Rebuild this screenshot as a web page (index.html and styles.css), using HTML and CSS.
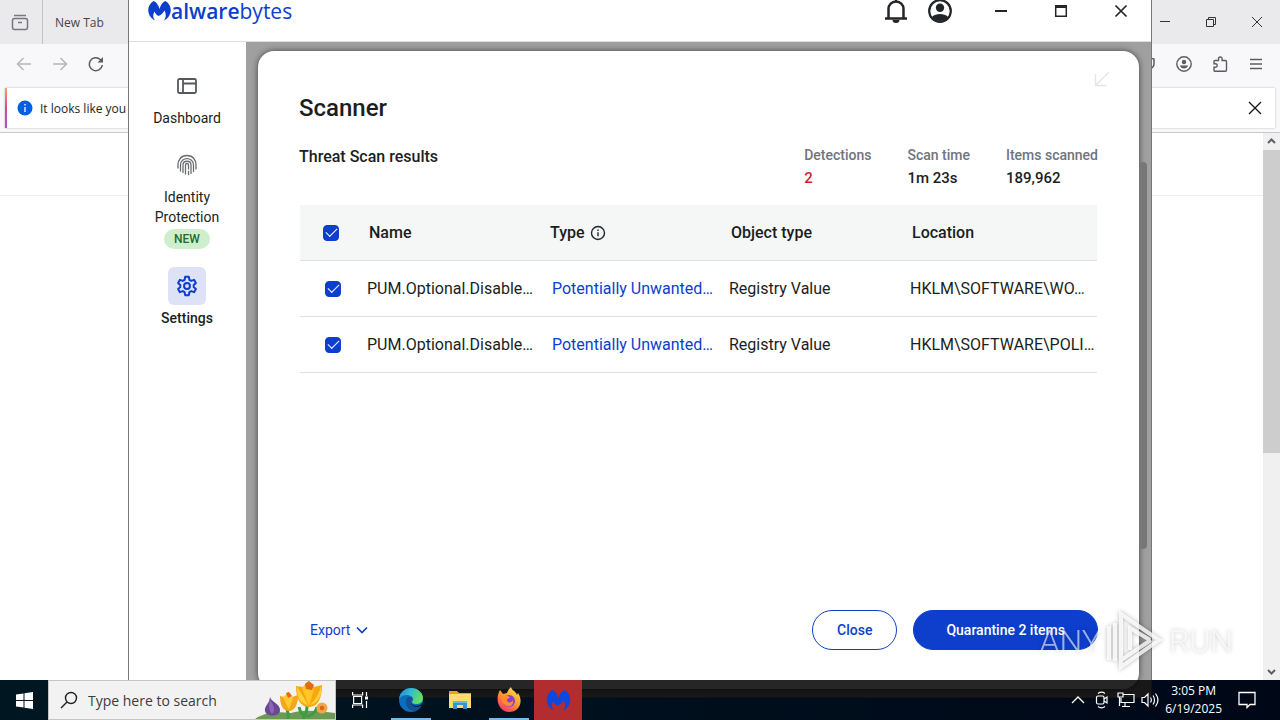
FILE: index.html
```html
<!DOCTYPE html>
<html lang="en">
<head>
    <meta charset="UTF-8">
    <meta name="viewport" content="width=device-width, initial-scale=1.0">
    <title>Malwarebytes</title>
    <link rel="stylesheet" href="styles.css">
</head>
<body>
    <div class="desktop">
        <!-- browser window behind -->
        <div class="browser">
            <div class="tab-strip">
                <button class="tab-view" aria-label="Firefox View">
                    <svg width="18" height="18" viewBox="0 0 18 18" fill="none" stroke="#77777d" stroke-width="1.5"><rect x="1.5" y="5.5" width="15" height="11" rx="2"/><path d="M3 2.5h12M7 9.5h4"/></svg>
                </button>
                <button class="tab">New Tab</button>
                <div class="browser-controls">
                    <button aria-label="Minimize"><svg width="12" height="12" viewBox="0 0 12 12" stroke="#333"><path d="M1 5.5h10"/></svg></button>
                    <button aria-label="Restore"><svg width="12" height="12" viewBox="0 0 12 12" fill="none" stroke="#333"><path d="M1.5 3.5h7v7h-7zM3.5 3.5v-2h7v7h-2"/></svg></button>
                    <button aria-label="Close"><svg width="12" height="12" viewBox="0 0 12 12" stroke="#333"><path d="M1 1l10 10M11 1L1 11"/></svg></button>
                </div>
            </div>
            <div class="toolbar">
                <button aria-label="Back"><svg width="16" height="16" viewBox="0 0 16 16" fill="none" stroke="#b5b5bb" stroke-width="1.5"><path d="M15 8H1.500M7.500 2L1.500 8l6 6"/></svg></button>
                <button aria-label="Forward"><svg width="16" height="16" viewBox="0 0 16 16" fill="none" stroke="#b5b5bb" stroke-width="1.5"><path d="M1 8h13.500M8.500 2l6 6-6 6"/></svg></button>
                <button aria-label="Reload"><svg width="16" height="16" viewBox="0 0 16 16" fill="none" stroke="#5b5b61" stroke-width="1.5"><path d="M14.300 9a6.500 6.500 0 1 1-2-5.500l1.500 1.500"/><path d="M15 1v5.500H9.500z" fill="#5b5b61" stroke="none"/></svg></button>
                <div class="toolbar-end">
                    <button aria-label="Protections"><svg width="16" height="16" viewBox="0 0 16 16" fill="none" stroke="#5b5b61" stroke-width="1.5"><path d="M2 3l6-1.5L14 3v5c0 3-3 5-6 6.5C5 13 2 11 2 8z"/></svg></button>
                    <button aria-label="Account"><svg width="16" height="16" viewBox="0 0 16 16" fill="none" stroke="#5b5b61" stroke-width="1.4"><circle cx="8" cy="8" r="7.2"/><circle cx="8" cy="6" r="2.2" fill="#5b5b61" stroke="none"/><path d="M3.8 9.5h8.400c-.8 2-2.300 3-4.200 3s-3.400-1-4.200-3z" fill="#5b5b61" stroke="none"/></svg></button>
                    <button aria-label="Extensions"><svg width="16" height="16" viewBox="0 0 16 16" fill="none" stroke="#5b5b61" stroke-width="1.4"><path d="M2 5.500a1 1 0 0 1 1-1h3.500V2.800a1.800 1.800 0 0 1 3.600 0v1.700h3.400a1 1 0 0 1 1 1v8.700a1 1 0 0 1-1 1H3a1 1 0 0 1-1-1v-3h1.500a1.600 1.600 0 0 0 0-3.400H2z"/></svg></button>
                    <button aria-label="Menu"><svg width="16" height="16" viewBox="0 0 16 16" stroke="#5b5b61" stroke-width="1.4"><path d="M2 3.500h12M2 8h12M2 12.500h12"/></svg></button>
                </div>
            </div>
            <div class="infobar-wrap">
                <div class="infobar">
                    <svg width="16" height="16" viewBox="0 0 16 16"><circle cx="8" cy="8" r="7.5" fill="#0061e0"/><path d="M8 7v5M8 4v1.600" stroke="#fff" stroke-width="1.3"/></svg>
                    <span>It looks like you h</span>
                    <button aria-label="Dismiss"><svg width="14" height="14" viewBox="0 0 14 14" stroke="#15141a" stroke-width="1.3"><path d="M1 1l12 12M13 1L1 13"/></svg></button>
                </div>
            </div>
            <div class="page">
                <div class="page-body"><div class="page-head"></div></div>
                <div class="scrollbar">
                    <svg width="17" height="17" viewBox="0 0 17 17" fill="none" stroke="#606060" stroke-width="2"><path d="M5 10l3.500-3.500L12 10"/></svg>
                    <div class="scroll-track"><div class="scroll-thumb"></div></div>
                    <svg width="17" height="17" viewBox="0 0 17 17" fill="none" stroke="#606060" stroke-width="2"><path d="M5 7l3.500 3.500L12 7"/></svg>
                </div>
            </div>
        </div>

        <!-- Malwarebytes window -->
        <div class="app">
            <header class="app-header">
                <div class="logo">
                    <svg width="23" height="22" viewBox="0 0 23 22" fill="#0d3ecc"><path d="M5.500 1C1 4-1 9 1 14c1 3 3 5 6 6.500C5 18 4.500 15 6.500 11.500c1 2 2 3.500 4 4.500 3-1 4.500-3 6-5.500 2 4 1.500 7-.5 10 3-1.500 5-3.500 6-6.500C24 9 22 4 17.500 1c-3 1-5 4-6 8-1-4-3-7-6-8z"/></svg>
                    <span class="logo-text"><b>alware</b>bytes</span>
                </div>
                <div class="header-actions">
                    <button aria-label="Notifications"><svg width="24" height="26" viewBox="0 0 24 26" fill="none" stroke="#22262a" stroke-width="2.5"><path d="M1 20.500h22M4.500 20V11a7.500 7.500 0 0 1 15 0v9M12 1.500v2"/><path d="M8.500 22h7a3.500 3 0 0 1-7 0z" fill="#22262a" stroke="none"/></svg></button>
                    <button aria-label="Account"><svg width="24" height="24" viewBox="0 0 24 24" fill="none" stroke="#22262a" stroke-width="2.2"><circle cx="12" cy="12" r="10.8"/><circle cx="12" cy="8.8" r="4.2" fill="#22262a" stroke="none"/><path d="M4 18c2-2.300 5-3 8-3s6 .7 8 3c-2 2.700-5 4-8 4s-6-1.300-8-4z" fill="#22262a" stroke="none"/></svg></button>
                </div>
                <div class="window-controls">
                    <button aria-label="Minimize"><svg width="14" height="14" viewBox="0 0 14 14" stroke="#22262a" stroke-width="2"><path d="M1 7h12"/></svg></button>
                    <button aria-label="Maximize"><svg width="14" height="14" viewBox="0 0 14 14" fill="none" stroke="#22262a" stroke-width="1.5"><path d="M1.700 2h10.600v10.300H1.700z"/><path d="M1 2.500h12" stroke-width="3"/></svg></button>
                    <button aria-label="Close"><svg width="14" height="14" viewBox="0 0 14 14" stroke="#22262a" stroke-width="1.7"><path d="M1.500 1.500l11 11M12.500 1.500l-11 11"/></svg></button>
                </div>
            </header>

            <div class="app-body">
                <nav class="sidebar">
                    <a href="#" class="nav-item">
                        <span class="nav-icon"><svg width="20" height="16" viewBox="0 0 20 16" fill="none" stroke="#55595e" stroke-width="1.8"><rect x="1" y="1" width="18" height="14" rx="1.5"/><path d="M6 1v14M6 5.500h13"/></svg></span>
                        Dashboard
                    </a>
                    <a href="#" class="nav-item">
                        <span class="nav-icon"><svg width="20" height="22" viewBox="0 0 20 22" fill="none" stroke="#6a6e73" stroke-width="1.3" stroke-linecap="round"><path d="M3 4.500C6.500.5 13.500.5 17 4.500M1 10c0-2 .7-3.500 2-5M19 10c0-2-.7-3.500-2-5M1 10v4M19 10v5M3.500 17v-6c0-8.500 13-8.500 13 0v6.500M6 18.500V11c0-5 8-5 8 0v8.500M8.500 20v-9c0-2 3-2 3 0v4M11.500 17.500v3"/></svg></span>
                        Identity Protection
                        <span class="badge">NEW</span>
                    </a>
                    <a href="#" class="nav-item active">
                        <span class="nav-icon"><svg width="22" height="22" viewBox="0 0 24 24" fill="none" stroke="#0d3ecc" stroke-width="2.2" stroke-linejoin="round"><path d="M10 2h4l.6 3.200 2 1.200L19.700 5.300l2 3.400L19.300 10.800v2.400l2.400 2.100-2 3.400-3.100-1.100-2 1.200L14 22h-4l-.6-3.200-2-1.200-3.100 1.100-2-3.400 2.400-2.100v-2.400L2.300 8.700l2-3.400 3.100 1.100 2-1.200z"/><circle cx="12" cy="12" r="3.2"/></svg></span>
                        Settings
                    </a>
                </nav>

                <div class="content">
                    <div class="modal">
                        <button class="collapse" aria-label="Collapse"><svg width="16" height="16" viewBox="0 0 16 16" fill="none" stroke="#e6e6e6" stroke-width="1.5"><path d="M15 1L2 14M1.500 3v11.500H13"/></svg></button>
                        <h1>Scanner</h1>
                        <div class="summary">
                            <h2>Threat Scan results</h2>
                            <dl class="stats">
                                <div><dt>Detections</dt><dd class="danger">2</dd></div>
                                <div><dt>Scan time</dt><dd>1m 23s</dd></div>
                                <div><dt>Items scanned</dt><dd>189,962</dd></div>
                            </dl>
                        </div>
                        <table class="results">
                            <thead>
                                <tr>
                                    <th class="check"><input type="checkbox" aria-label="Select all" checked></th>
                                    <th class="col">Name</th>
                                    <th class="col">Type <svg width="16" height="16" viewBox="0 0 16 16" fill="none" stroke="#22262a" stroke-width="1.4"><circle cx="8" cy="8" r="6.5"/><path d="M8 7.200v4M8 4.500V6"/></svg></th>
                                    <th class="col">Object type</th>
                                    <th>Location</th>
                                </tr>
                            </thead>
                            <tbody>
                                <tr>
                                    <td class="check"><input type="checkbox" aria-label="Select item 1" checked></td>
                                    <td>PUM.Optional.Disable…</td>
                                    <td class="type"><a href="#">Potentially Unwanted…</a></td>
                                    <td>Registry Value</td>
                                    <td>HKLM\SOFTWARE\WO…</td>
                                </tr>
                                <tr>
                                    <td class="check"><input type="checkbox" aria-label="Select item 2" checked></td>
                                    <td>PUM.Optional.Disable…</td>
                                    <td class="type"><a href="#">Potentially Unwanted…</a></td>
                                    <td>Registry Value</td>
                                    <td>HKLM\SOFTWARE\POLI…</td>
                                </tr>
                            </tbody>
                        </table>
                        <footer class="modal-footer">
                            <button class="export">Export <svg width="12" height="8" viewBox="0 0 12 8" fill="none" stroke="#0d3ecc" stroke-width="1.6"><path d="M1 1.500l5 5 5-5"/></svg></button>
                            <button class="btn">Close</button>
                            <button class="btn primary">Quarantine 2 items</button>
                        </footer>
                    </div>
                    <div class="app-scroll"></div>
                </div>
            </div>
        </div>

        <div class="watermark">
            <span>ANY</span>
            <svg width="58" height="66" viewBox="0 0 58 66" fill="none" stroke="#fff" stroke-opacity=".8" stroke-width="4"><path d="M15 52V6l38 26-38 27v-7l30-20M24 42V20l20 12M9 15v38M3 18v34"/></svg>
            <span>RUN</span>
        </div>

        <footer class="taskbar">
            <button class="start" aria-label="Start"><svg width="17" height="17" viewBox="0 0 17 17" fill="#fff"><path d="M0 2.500L7.500 1.500V8H0zM8.500 1.300L17 0v8H8.500zM0 9h7.500v6.500L0 14.500zM8.500 9H17v8l-8.500-1.300z"/></svg></button>
            <label class="search">
                <svg width="18" height="18" viewBox="0 0 18 18" fill="none" stroke="#222" stroke-width="1.4"><circle cx="11" cy="7" r="5.5"/><path d="M7 11l-6 6"/></svg>
                <input type="text" placeholder="Type here to search" aria-label="Search">
                <svg class="flowers" width="80" height="40" viewBox="0 0 80 40">
                    <path d="M0 40C12 32 25 33 36 34 48 30 66 32 80 34v6z" fill="#6b9a55"/>
                    <path d="M33 40c1-6-1-9-2-13M48 40c4-6 4-10 4-15M52 38c5-2 9-6 10-10M50 37c-3-1-5-5-6-9" stroke="#3f9a45" stroke-width="3" fill="none"/>
                    <path d="M15 18c1 5 11 7 10 14-1 6-14 6-15 0-1-5 5-8 5-14z" fill="#6b4794"/><path d="M15 19c-1 7-2 11 2 16 5-5 0-9-2-16z" fill="#8c66b5"/>
                    <path d="M25 17l4 1 4-4 4 4 6-2c0 9-3 16-9 16-6 0-9-6-9-15z" fill="#f3a818"/><path d="M28 18l5-4 5 5-4 12z" fill="#ffc936"/><path d="M31 14l3-1 3 4-4 2z" fill="#e56a16"/>
                    <path d="M41 7l7 1 5-6 6 6 8-2c0 13-4 22-13 22S41 19 41 7z" fill="#f7a80d"/><path d="M47 9l6-6 6 7-5 17z" fill="#ffc625"/><path d="M50 5l4-3 5 4-2 5-6-1z" fill="#e56a16"/><path d="M42 8c4 6 8 12 11 18-9-2-11-9-11-18zM66 7c-2 8-6 14-11 19 9-2 12-10 11-19z" fill="#ffd03a"/>
                    <circle cx="67" cy="29" r="5.5" fill="#f0a64b"/><circle cx="67" cy="29" r="2.3" fill="#d6681d"/>
                </svg>
            </label>
            <div class="tasks">
                <button class="task task-view" aria-label="Task view"><svg width="17" height="16" viewBox="0 0 17 16" fill="none" stroke="#fff" stroke-width="1.2"><path d="M.6 0v3h10V0M.6 16v-3h10v3M1.600 4.500h8v7h-8zM14.500 0v4M14.500 9v7"/><path d="M13 4.500h3v3h-3z" fill="#fff" stroke="none"/></svg></button>
                <button class="task open" aria-label="Edge">
                    <svg width="26" height="26" viewBox="0 0 26 26">
                        <defs><linearGradient id="edge" x1="0" y1="0" x2="1" y2=".4"><stop offset="0" stop-color="#1688ce"/><stop offset=".5" stop-color="#35bbd0"/><stop offset="1" stop-color="#63df62"/></linearGradient></defs>
                        <circle cx="13" cy="13" r="12" fill="#0c6dbd"/><path d="M1 12C2 5 7 1 13 1c7 0 12 5 12 10 0 4-3 6-7 6-3 0-4-1-4-2 3-3 0-7-5-7-4 0-7 2-8 4z" fill="url(#edge)"/><path d="M9 11c-3 5 0 12 7 13 3 0 6-3 7-5-5 3-11 0-10-5 0-1 1-2 2-2-1-2-4-3-6-1z" fill="#154f91"/><path d="M13 13c-1 5 5 7 9 5l4-3v3l-3 1c-6 3-11-1-10-6z" fill="#061820"/>
                    </svg>
                </button>
                <button class="task" aria-label="File Explorer"><svg width="22" height="20" viewBox="0 0 22 20"><path d="M0 1h8l2 2h12v15H0z" fill="#e0a32d"/><path d="M0 4h22v14H0z" fill="#ffdc73"/><path d="M4 19v-8h14v8h-4v-4H8v4z" fill="#3d92cb"/><path d="M4 11h14v2H4z" fill="#67b6e5"/></svg></button>
                <button class="task open" aria-label="Firefox">
                    <svg width="24" height="26" viewBox="0 0 24 26">
                        <defs><linearGradient id="fox" x1=".8" y1="0" x2=".2" y2="1"><stop offset="0" stop-color="#ffe64a"/><stop offset=".5" stop-color="#ff9330"/><stop offset="1" stop-color="#f53069"/></linearGradient></defs>
                        <path d="M3 3l3 4 4-1c1-3 3-5 4-6 1 4 5 4 6 8l1-2c6 9 1 19-9 19C3 25-3 14 3 3z" fill="url(#fox)"/><circle cx="12" cy="14" r="6" fill="#8440ce"/><path d="M5 9c5-2 7 0 8 2-3 0-4 2-2 4 2 1 4 0 5-2 1 6-4 8-8 5-3-2-4-6-3-9z" fill="#ff8b2a"/>
                    </svg>
                </button>
                <button class="task alert" aria-label="Malwarebytes"><svg width="25" height="23" viewBox="0 0 23 22" fill="#0b48e0"><path d="M5.500 1C1 4-1 9 1 14c1 3 3 5 6 6.500C5 18 4.500 15 6.500 11.500c1 2 2 3.500 4 4.500 3-1 4.500-3 6-5.500 2 4 1.500 7-.5 10 3-1.500 5-3.500 6-6.500C24 9 22 4 17.500 1c-3 1-5 4-6 8-1-4-3-7-6-8z"/></svg></button>
            </div>
            <div class="tray">
                <button aria-label="Show hidden icons"><svg width="14" height="8" viewBox="0 0 14 8" fill="none" stroke="#fff" stroke-width="1.4"><path d="M1 7l6-6 6 6"/></svg></button>
                <button aria-label="Meet now"><svg width="14" height="18" viewBox="0 0 14 18" fill="none" stroke="#fff" stroke-width="1.2"><rect x="1.5" y="5" width="7.5" height="8" rx="1.5"/><path d="M9 8l3-2v6l-3-2M3 2.500c2-1.500 5-1.500 7 0M3 15.500c2 1.500 5 1.500 7 0"/></svg></button>
                <button aria-label="Network"><svg width="18" height="16" viewBox="0 0 18 16" fill="none" stroke="#fff" stroke-width="1.2"><path d="M6 2.500h11v8H4V6M8 10.500v4M5 14.500h8M1 1h5v4H1zM2.500 5v9"/></svg></button>
                <button aria-label="Volume"><svg width="18" height="16" viewBox="0 0 18 16" fill="none" stroke="#fff" stroke-width="1.2"><path d="M1 5.500h2.500L7 2v12l-3.500-3.500H1zM9.500 5.500c1 1.500 1 3.500 0 5M12 3.500c2 2.500 2 6.500 0 9M14.500 1.500c3 4 3 9 0 13"/></svg></button>
                <time class="clock">3:05 PM<br>6/19/2025</time>
                <button class="action-center" aria-label="Action center"><svg width="18" height="18" viewBox="0 0 18 18" fill="none" stroke="#fff" stroke-width="1.3"><path d="M1 1.500h16v12h-5l-3 3v-3H1z"/></svg></button>
            </div>
        </footer>
    </div>
</body>
</html>
```
FILE: styles.css
```css
* {
    box-sizing: border-box;
}
body {
    margin: 0;
    font-family: Roboto, "Liberation Sans", sans-serif;
    color: #1b1e21;
}
button {
    display: flex;
    align-items: center;
    justify-content: center;
    padding: 0;
    border: none;
    background: none;
    font-family: inherit;
    color: inherit;
    cursor: pointer;
}
a {
    color: inherit;
    text-decoration: none;
}
svg {
    flex-shrink: 0;
}
.desktop {
    position: relative;
    display: flex;
    flex-direction: column;
    height: 100vh;
    overflow: hidden;
    background: linear-gradient(to right, #009ae0, #0035a0);
}

/* browser */
.browser {
    flex: 1;
    display: flex;
    flex-direction: column;
    min-height: 0;
    background: #fff;
    font-family: "Open Sans", "Noto Sans", sans-serif;
}
.tab-strip {
    display: flex;
    height: 44px;
    background: #eaeaed;
}
.tab-view {
    width: 43px;
    padding-right: 2px;
    border-right: 1px solid #c4c4c8;
}
.tab {
    padding: 0 12px;
    font-size: 12px;
    color: #45454c;
}
.browser-controls {
    display: flex;
    margin-left: auto;
}
.browser-controls button {
    width: 46px;
}
.toolbar {
    display: flex;
    height: 40px;
    padding: 0 16px;
    gap: 20px;
    background: #f8f8fb;
}
.toolbar-end {
    display: flex;
    gap: 20px;
    margin-left: auto;
}
.infobar-wrap {
    padding: 4px 5px;
    background: #f8f8fb;
    border-bottom: 1px solid #c8c8cc;
}
.infobar {
    display: flex;
    align-items: center;
    gap: 7px;
    height: 40px;
    padding: 0 13px 0 10px;
    border-left: 2px solid;
    border-image: linear-gradient(#ffa266, #e0468c, #9059d6) 1;
    background: #fff;
    box-shadow: 0 0 2px rgba(0,0,0,0.25);
    font-size: 12px;
}
.infobar span {
    flex: 1;
}
.page {
    flex: 1;
    display: flex;
    min-height: 0;
}
.page-body {
    flex: 1;
}
.page-head {
    height: 63px;
    border-bottom: 1px solid #ededf0;
}
.scrollbar {
    display: flex;
    flex-direction: column;
    width: 17px;
    background: #f0f0f0;
}
.scroll-track {
    flex: 1;
}
.scroll-thumb {
    height: 59%;
    background: #cdcdcd;
}

/* app window */
.app {
    position: absolute;
    top: -20px;
    bottom: 22px;
    left: 10%;
    right: 10%;
    display: flex;
    flex-direction: column;
    background: #fff;
    border: 1px solid #777;
}
.app-header {
    display: flex;
    align-items: center;
    height: 61px;
    padding: 0 16px 0 19px;
    border-bottom: 1px solid #dedede;
}
.logo {
    display: flex;
    align-items: center;
    color: #0d3ecc;
    font-family: "Open Sans", sans-serif;
}
.logo-text {
    font-size: 21px;
    line-height: 26px;
}
.logo b {
    font-weight: 600;
}
.header-actions {
    display: flex;
    gap: 20px;
    margin-left: auto;
}
.window-controls {
    display: flex;
    gap: 46px;
    margin-left: 42px;
    padding-right: 7px;
}
.app-body {
    flex: 1;
    display: flex;
    min-height: 0;
}
.sidebar {
    display: flex;
    flex-direction: column;
    gap: 18px;
    width: 117px;
    padding: 25px 17px 0 16px;
}
.nav-item {
    display: flex;
    flex-direction: column;
    align-items: center;
    font-size: 14px;
    line-height: 20px;
    text-align: center;
}
.nav-icon {
    display: flex;
    align-items: center;
    justify-content: center;
    width: 38px;
    height: 38px;
    margin-bottom: 3px;
    border-radius: 6px;
}
.active {
    font-weight: 500;
}
.active .nav-icon {
    background: #dde2f7;
}
.badge {
    margin-top: 2px;
    padding: 0 10px;
    border-radius: 10px;
    background: #cfeecb;
    color: #246b2b;
    font-size: 12px;
    font-weight: 500;
}
.content {
    position: relative;
    flex: 1;
    display: flex;
    min-width: 0;
    padding: 9px 12px 8px;
    background: #a0a0a0;
}
.app-scroll {
    position: absolute;
    top: 120px;
    right: 4px;
    width: 8px;
    height: 387px;
    border-radius: 4px;
    background: #777;
}
.modal {
    position: relative;
    flex: 1;
    display: flex;
    flex-direction: column;
    min-width: 0;
    padding: 41px 41px 39px;
    border-radius: 16px;
    background: #fff;
    box-shadow: 0 0 6px rgba(0,0,0,0.6);
}
.collapse {
    position: absolute;
    top: 20px;
    right: 29px;
}
h1 {
    margin: 0;
    font-size: 24px;
    line-height: 32px;
    font-weight: 500;
}
.summary {
    display: flex;
    justify-content: space-between;
    margin-top: 20px;
}
h2 {
    margin: 0;
    font-size: 16px;
    line-height: 26px;
    font-weight: 500;
}
.stats {
    display: flex;
    gap: 36px;
    margin: 0;
    font-weight: 500;
}
dt {
    font-size: 14px;
    line-height: 22px;
    color: #70757c;
}
dd {
    margin: 0;
    font-size: 15px;
    line-height: 24px;
}
.danger {
    color: #d81e28;
}
.results {
    margin: 15px 1px 0;
    table-layout: fixed;
    width: calc(100% - 2px);
    border-spacing: 0;
    font-size: 16px;
}
.results thead {
    background: #f4f7f6;
}
th, td {
    height: 56px;
    padding: 0 0 0 5px;
    border-bottom: 1px solid #dfe1e3;
    overflow: hidden;
    text-align: left;
    text-overflow: ellipsis;
    white-space: nowrap;
}
th {
    padding-left: 7px;
    font-weight: 500;
}
th svg {
    margin-left: 1px;
    vertical-align: -3px;
}
.check {
    width: 62px;
    padding: 0 0 0 25px;
}
th.check {
    padding-left: 23px;
}
.col {
    width: 181px;
}
td.type {
    padding-left: 9px;
    color: #0d3ecc;
}
.check input {
    appearance: none;
    display: grid;
    place-items: center;
    width: 16px;
    height: 16px;
    margin: 0;
    border-radius: 4px;
    border: 1px solid #0d3ecc;
}
.check input:checked {
    background: #0d3ecc;
}
.check input:checked::after {
    content: "";
    width: 10px;
    height: 5px;
    margin-bottom: 3px;
    border: solid #fff;
    border-width: 0 0 1px 1px;
    transform: rotate(-45deg);
}
.modal-footer {
    display: flex;
    align-items: center;
    gap: 16px;
    margin-top: auto;
}
.export {
    gap: 6px;
    margin-right: auto;
    padding-left: 11px;
    font-size: 14px;
    color: #0d3ecc;
}
.btn {
    height: 40px;
    padding: 0 24px;
    border: 1px solid #0d3ecc;
    border-radius: 20px;
    font-size: 14px;
    font-weight: 500;
    color: #0d3ecc;
}
.primary {
    padding: 0 32px;
    background: #0d3ecc;
    color: #fff;
}

.watermark {
    position: absolute;
    right: 47px;
    bottom: 46px;
    display: flex;
    align-items: center;
    gap: 5px;
    color: rgba(255,255,255,0.6);
    font-size: 32px;
    font-weight: 300;
    filter: drop-shadow(0 0 2px rgba(0,0,0,0.35));
    pointer-events: none;
}

/* taskbar */
.taskbar {
    position: relative;
    display: flex;
    height: 40px;
    background: rgba(0,0,0,0.85);
    color: #fff;
    font-family: "Open Sans", "Noto Sans", sans-serif;
}
.start {
    width: 48px;
}
.search {
    position: relative;
    display: flex;
    align-items: center;
    width: 288px;
    padding-left: 11px;
    gap: 10px;
    background: #f2f2f2;
    border: 1px solid #c5c5c5;
}
.search input {
    flex: 1;
    min-width: 0;
    padding: 0;
    border: none;
    outline: none;
    background: none;
    font-family: inherit;
    font-size: 14px;
}
.search input::placeholder {
    color: #3c3c3c;
    opacity: 1;
}
.flowers {
    position: absolute;
    right: 0;
    bottom: 0;
}
.tasks {
    display: flex;
    gap: 1px;
}
.task {
    width: 48px;
}
.task-view {
    margin-right: 2px;
}
.open {
    position: relative;
}
.open::after {
    content: "";
    position: absolute;
    bottom: 0;
    left: 4px;
    right: 4px;
    height: 2px;
    background: #76b9ed;
}
.alert {
    background: #b32d30;
}
.tray {
    display: flex;
    align-items: center;
    gap: 6px;
    margin-left: auto;
    padding-right: 24px;
}
.tray button {
    width: 18px;
}
.clock {
    font-size: 12px;
    line-height: 18px;
    text-align: center;
}
.action-center {
    margin-left: 10px;
}
```
